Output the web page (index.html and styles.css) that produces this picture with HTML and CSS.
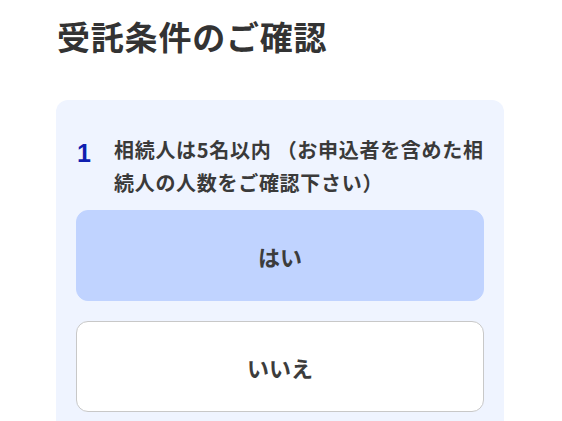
FILE: index.html
```html
<!DOCTYPE html>
<html lang="ja">
<head>
<meta charset="utf-8">
<link rel="stylesheet" href="styles.css">
</head>
<body>
<main class="page">
  <h1 class="title">受託条件のご確認</h1>
  <section class="card">
    <div class="question">
      <span class="qnum">1</span>
      <p class="qtext">相続人は5名以内 （お申込者を含めた相続人の人数をご確認下さい）</p>
    </div>
    <div class="options">
      <button class="option option-selected">はい</button>
      <button class="option">いいえ</button>
    </div>
  </section>
</main>
</body>
</html>
```

FILE: styles.css
```css
html, body {
  margin: 0;
  padding: 0;
  background: #ffffff;
}
body {
  font-family: "Noto Sans CJK JP", "Noto Sans", sans-serif;
  color: #333333;
}
.page {
  padding: 16px 58px 0 56px;
}
.title {
  margin: 0 0 44px 0;
  padding-left: 1px;
  font-size: 33px;
  line-height: 40px;
  font-weight: 700;
  letter-spacing: 0.8px;
  color: #333333;
}
.card {
  background: #eff4ff;
  border-radius: 12px 12px 0 0;
  padding: 33px 20px 30px 20px;
  min-height: 300px;
}
.question {
  display: flex;
  align-items: flex-start;
}
.qnum {
  flex: 0 0 37px;
  font-family: "Liberation Sans", Arial, sans-serif;
  font-weight: 700;
  font-size: 25px;
  line-height: 33px;
  margin-top: 4px;
  padding-left: 1px;
  color: #0f1fb0;
}
.qtext {
  margin: 0;
  font-size: 20px;
  line-height: 33px;
  font-weight: 700;
  letter-spacing: 0.7px;
  color: #3a3a3a;
}
.options {
  display: flex;
  flex-direction: column;
  gap: 20px;
  margin-top: 11px;
}
.option {
  display: block;
  width: 100%;
  height: 91px;
  border-radius: 12px;
  border: 1px solid #c8c8c8;
  background: #ffffff;
  font-family: "Noto Sans CJK JP", "Noto Sans", sans-serif;
  font-size: 22px;
  font-weight: 700;
  color: #3c3c3c;
  padding: 0;
}
.option-selected {
  background: #c0d3ff;
  border-color: #c0d3ff;
}
```
